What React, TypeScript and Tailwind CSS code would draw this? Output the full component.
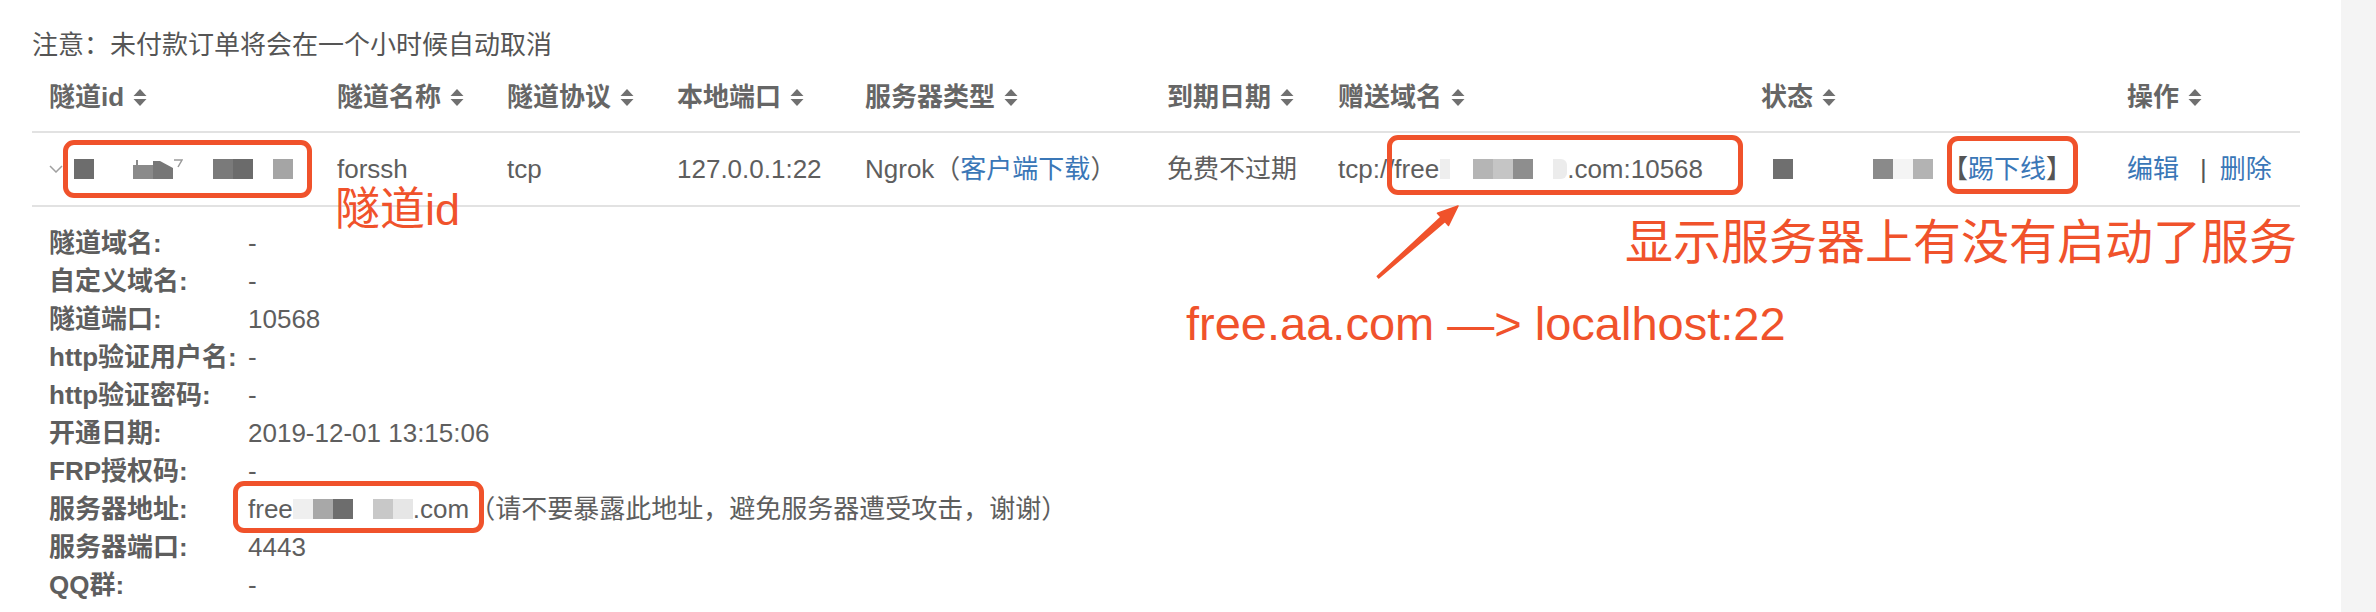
import React from "react";

const SortIcon = () => (
  <svg width="14" height="17" viewBox="0 0 14 17" className="ml-[9px] shrink-0">
    <path d="M7 0 L13.5 7 L0.5 7 Z" fill="#707070" />
    <path d="M0.5 10 L13.5 10 L7 17 Z" fill="#707070" />
  </svg>
);

const headers = [
  "隧道id",
  "隧道名称",
  "隧道协议",
  "本地端口",
  "服务器类型",
  "到期日期",
  "赠送域名",
  "状态",
  "操作",
];

const details: [string, React.ReactNode][] = [
  ["隧道域名:", "-"],
  ["自定义域名:", "-"],
  ["隧道端口:", "10568"],
  ["http验证用户名:", "-"],
  ["http验证密码:", "-"],
  ["开通日期:", "2019-12-01 13:15:06"],
  ["FRP授权码:", "-"],
  [
    "服务器地址:",
    <span className="flex items-center">
      <span className="relative flex items-center">
        <span>free</span>
        <span className="inline-block w-[20px] h-[20px] bg-[#efefef]" />
        <span className="inline-block w-[20px] h-[20px] bg-[#a8a8a8]" />
        <span className="inline-block w-[20px] h-[20px] bg-[#6d6d6d]" />
        <span className="inline-block w-[20px] h-[20px] bg-white" />
        <span className="inline-block w-[20px] h-[20px] bg-[#c8c8c8]" />
        <span className="inline-block w-[20px] h-[20px] bg-[#e6e6e6]" />
        <span>.com</span>
        <span className="absolute left-[-15px] right-[-15px] top-[-9px] bottom-[-4px] border-[5px] border-[#f0522b] rounded-[11px]" />
      </span>
      <span>（请不要暴露此地址，避免服务器遭受攻击，谢谢）</span>
    </span>,
  ],
  ["服务器端口:", "4443"],
  ["QQ群:", "-"],
];

export default function App() {
  return (
    <div className="relative flex w-[2376px] h-[612px] overflow-hidden bg-white font-['Liberation_Sans','Noto_Sans_CJK_SC',sans-serif] text-[26px] text-[#5e5e5e]">
      <div className="w-[2341px] pl-[32px] pt-[27px]">
        <div className="leading-[36px] text-[#555]">注意：未付款订单将会在一个小时候自动取消</div>

        <div className="w-[2268px]">
          {/* header */}
          <div className="grid grid-cols-[288px_170px_170px_188px_302px_171px_423px_366px_190px] h-[70px] border-b-2 border-[#e2e2e2]">
            {headers.map((h) => (
              <div key={h} className="flex items-center pl-[17px] font-bold text-[#666] whitespace-nowrap">
                <span>{h}</span>
                <SortIcon />
              </div>
            ))}
          </div>

          {/* data row */}
          <div className="grid grid-cols-[288px_170px_170px_188px_302px_171px_423px_366px_190px] h-[74px] border-b-2 border-[#e2e2e2] whitespace-nowrap">
            <div className="flex items-center pl-[17px]">
              <svg width="14" height="8" viewBox="0 0 14 8" className="shrink-0">
                <polyline points="1,1 7,7 13,1" fill="none" stroke="#a0a0a0" strokeWidth="1.5" />
              </svg>
              <div className="flex items-center w-[249px] h-[58px] border-[5px] border-[#f0522b] rounded-[11px] pl-[6px]">
                <span className="inline-block w-[20px] h-[20px] bg-[#6d6d6d]" />
                <svg width="50" height="20" viewBox="0 0 50 20" className="ml-[39px] shrink-0">
                  <polygon points="0,20 0,6 3,6 3,1 5,1 5,6 20,6 20,20" fill="#8a8a8a" />
                  <polygon points="20,20 20,2 27,2 40,9 40,20" fill="#777777" />
                  <path d="M41 1 L49 1 L45 8" fill="none" stroke="#9a9a9a" strokeWidth="1.5" />
                </svg>
                <span className="ml-[30px] inline-block w-[20px] h-[20px] bg-[#7a7a7a]" />
                <span className="inline-block w-[20px] h-[20px] bg-[#6b6b6b]" />
                <span className="ml-[20px] inline-block w-[20px] h-[20px] bg-[#a5a5a5]" />
              </div>
            </div>
            <div className="flex items-center pl-[17px]">forssh</div>
            <div className="flex items-center pl-[17px]">tcp</div>
            <div className="flex items-center pl-[17px]">127.0.0.1:22</div>
            <div className="flex items-center pl-[17px]">
              Ngrok（<span className="text-[#3a77b7]">客户端下载</span>）
            </div>
            <div className="flex items-center pl-[17px]">免费不过期</div>
            <div className="relative flex items-center pl-[17px]">
              <span>tcp://free</span>
              <span className="ml-[1px] inline-block w-[10px] h-[20px] bg-[#eeeeee]" />
              <span className="ml-[23px] inline-block w-[20px] h-[20px] bg-[#b5b5b5]" />
              <span className="inline-block w-[20px] h-[20px] bg-[#c5c5c5]" />
              <span className="inline-block w-[20px] h-[20px] bg-[#8e8e8e]" />
              <span className="ml-[20px] inline-block w-[14px] h-[20px] bg-[#ececec] rounded-r-[6px]" />
              <span>.com:10568</span>
              <span className="absolute left-[66px] top-[2px] w-[356px] h-[60px] border-[5px] border-[#f0522b] rounded-[11px]" />
            </div>
            <div className="relative flex items-center pl-[29px]">
              <span className="inline-block w-[20px] h-[20px] bg-[#6f6f6f]" />
              <span className="ml-[80px] inline-block w-[20px] h-[20px] bg-[#8a8a8a]" />
              <span className="inline-block w-[20px] h-[20px] bg-[#f4f4f4]" />
              <span className="inline-block w-[20px] h-[20px] bg-[#b3b3b3]" />
              <span className="ml-[9px] text-[#555]">
                【<span className="text-[#3a77b7]">踢下线</span>】
              </span>
              <span className="absolute left-[203px] top-[3px] w-[131px] h-[58px] border-[5px] border-[#f0522b] rounded-[11px]" />
            </div>
            <div className="flex items-center pl-[17px] text-[#3a77b7]">
              <span>编辑</span>
              <span className="ml-[21px] mr-[13px] text-[#555]">|</span>
              <span>删除</span>
            </div>
          </div>

          {/* details */}
          <div className="pt-[17px] pl-[17px]">
            {details.map(([label, value]) => (
              <div key={label} className="flex items-center h-[38px] whitespace-nowrap">
                <div className="w-[199px] shrink-0 font-bold text-[#5e5e5e]">{label}</div>
                <div>{value}</div>
              </div>
            ))}
          </div>
        </div>
      </div>
      <div className="w-[35px] bg-[#f4f4f4]" />

      {/* annotations */}
      <div className="absolute left-[335px] top-[187px] text-[45px] leading-none text-[#f0522b] whitespace-nowrap">
        隧道id
      </div>
      <div className="absolute left-[1625px] top-[219px] text-[48px] leading-none text-[#f0522b] whitespace-nowrap">
        显示服务器上有没有启动了服务
      </div>
      <div className="absolute left-[1186px] top-[300px] text-[47px] leading-none text-[#f0522b] whitespace-nowrap">
        free.aa.com —&gt; localhost:22
      </div>
      <svg className="absolute left-0 top-0 pointer-events-none" width="2376" height="612" viewBox="0 0 2376 612">
        <polygon
          points="1378.7,278 1445,221.5 1448.5,225.5 1458,206 1437.5,213.3 1441,217.1 1377.3,276.3"
          fill="#f0522b"
          stroke="#f0522b"
          strokeWidth="1.5"
          strokeLinejoin="round"
        />
      </svg>
    </div>
  );
}
